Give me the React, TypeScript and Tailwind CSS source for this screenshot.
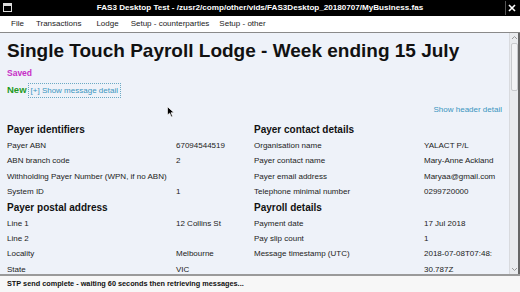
import React from "react";

const sans = { fontFamily: '"Liberation Sans", Arial, sans-serif' };

function Row({ label, value }: { label: string; value: React.ReactNode }) {
  return (
    <div className="flex text-[8px] leading-[15.4px] text-[#222]">
      <div className="w-[169px] shrink-0">{label}</div>
      <div className="flex-1">{value}</div>
    </div>
  );
}

function Row2({ label, value }: { label: string; value: React.ReactNode }) {
  return (
    <div className="flex text-[8px] leading-[15.4px] text-[#222]">
      <div className="w-[170px] shrink-0">{label}</div>
      <div className="w-[78px]">{value}</div>
    </div>
  );
}

function Heading({ children }: { children: React.ReactNode }) {
  return <div className="text-[10px] font-bold leading-[16px] text-[#111]">{children}</div>;
}

export default function App() {
  return (
    <div className="w-[520px] h-[292px] flex flex-col overflow-hidden bg-white" style={sans}>
      {/* Title bar */}
      <div className="h-[16px] bg-black flex items-center relative">
        <div className="absolute left-[3px] top-[3px] w-[9px] h-[9px] border border-[#ddd] flex flex-col">
          <div className="h-[2px] bg-[#ddd]" />
        </div>
        <div className="flex-1 text-center text-white font-bold text-[8.1px] leading-[16px]">
          FAS3 Desktop Test - /zusr2/comp/other/vids/FAS3Desktop_20180707/MyBusiness.fas
        </div>
        <div className="absolute right-[3px] top-[1px] w-[12px] h-[14px] flex items-center justify-center border-l border-[#555]">
          <svg width="8" height="8" viewBox="0 0 8 8">
            <path d="M1 1 L7 7 M7 1 L1 7" stroke="white" strokeWidth="1.6" />
          </svg>
        </div>
      </div>
      {/* Menu bar */}
      <div className="h-[17px] bg-white flex items-center text-[8px] text-[#222] border-b border-[#8a8a8a]">
        <span className="ml-[11px]">File</span>
        <span className="ml-[12px]">Transactions</span>
        <span className="ml-[15px]">Lodge</span>
        <span className="ml-[12px]">Setup - counterparties</span>
        <span className="ml-[10px]">Setup - other</span>
      </div>
      {/* Content */}
      <div className="flex-1 flex min-h-0 bg-[#eef2f9] border-r-2 border-[#666]">
        <div className="flex-1 min-w-0 overflow-hidden px-[7px] relative">
          <div className="mt-[7px] text-[19px] font-bold leading-[22px] text-[#111] whitespace-nowrap">
            Single Touch Payroll Lodge - Week ending 15 July
          </div>
          <div className="mt-[5px] text-[8.5px] font-bold leading-[12px] text-[#c62fc6]">Saved</div>
          <div className="mt-[4px] flex items-center h-[15px]">
            <span className="text-[9.5px] font-bold text-[#1f9a1f]">New</span>
            <span className="ml-[1px] h-[15px] px-[2px] flex items-center border border-dotted border-[#6aa9c4] text-[8px] text-[#3a95c0]">
              [+] Show message detail
            </span>
          </div>
          <div className="mt-[6px] text-right text-[8px] leading-[12px] text-[#3a95c0]">Show header detail</div>
          <div className="mt-[6px] grid grid-cols-[238px_248px] gap-x-[9px]">
            <div>
              <Heading>Payer identifiers</Heading>
              <Row label="Payer ABN" value="67094544519" />
              <Row label="ABN branch code" value="2" />
              <Row label="Withholding Payer Number (WPN, if no ABN)" value="" />
              <Row label="System ID" value="1" />
              <Heading>Payer postal address</Heading>
              <Row label="Line 1" value="12 Collins St" />
              <Row label="Line 2" value="" />
              <Row label="Locality" value="Melbourne" />
              <Row label="State" value="VIC" />
            </div>
            <div>
              <Heading>Payer contact details</Heading>
              <Row2 label="Organisation name" value="YALACT P/L" />
              <Row2 label="Payer contact name" value="Mary-Anne Ackland" />
              <Row2 label="Payer email address" value="Maryaa@gmail.com" />
              <Row2 label="Telephone minimal number" value="0299720000" />
              <Heading>Payroll details</Heading>
              <Row2 label="Payment date" value="17 Jul 2018" />
              <Row2 label="Pay slip count" value="1" />
              <Row2 label="Message timestamp (UTC)" value={<>2018-07-08T07:48:<br />30.787Z</>} />
            </div>
          </div>
          {/* mouse cursor */}
          <svg className="absolute left-[167px] top-[73px]" width="8" height="12" viewBox="0 0 9 13">
            <path d="M0.5 0.5 L0.5 10 L3 7.8 L4.8 12 L6.3 11.3 L4.6 7.3 L8 7.3 Z" fill="black" stroke="white" strokeWidth="0.8" />
          </svg>
        </div>
        {/* Scrollbar */}
        <div className="w-[9px] flex flex-col items-center bg-[#e9ebee] border-l border-[#d8dade]">
          <svg width="7" height="7" viewBox="0 0 7 7" className="mt-[1px]">
            <path d="M1 5 L3.5 2.5 L6 5" stroke="#9a9a9a" fill="none" strokeWidth="1" />
          </svg>
          <div className="mt-[2px] w-[7px] h-[48px] bg-[#f2f3f5] border border-[#c8cacd] rounded-[2px]" />
          <div className="flex-1" />
          <svg width="7" height="7" viewBox="0 0 7 7" className="mb-[1px]">
            <path d="M1 2 L3.5 4.5 L6 2" stroke="#9a9a9a" fill="none" strokeWidth="1" />
          </svg>
        </div>
      </div>
      {/* Status bar */}
      <div className="h-[18px] shrink-0 border-t-2 border-[#9a9a9a] bg-[#f7f7f7] flex items-center px-[7px]">
        <span className="text-[7.3px] font-bold text-[#111]">
          STP send complete - waiting 60 seconds then retrieving messages...
        </span>
      </div>
    </div>
  );
}
